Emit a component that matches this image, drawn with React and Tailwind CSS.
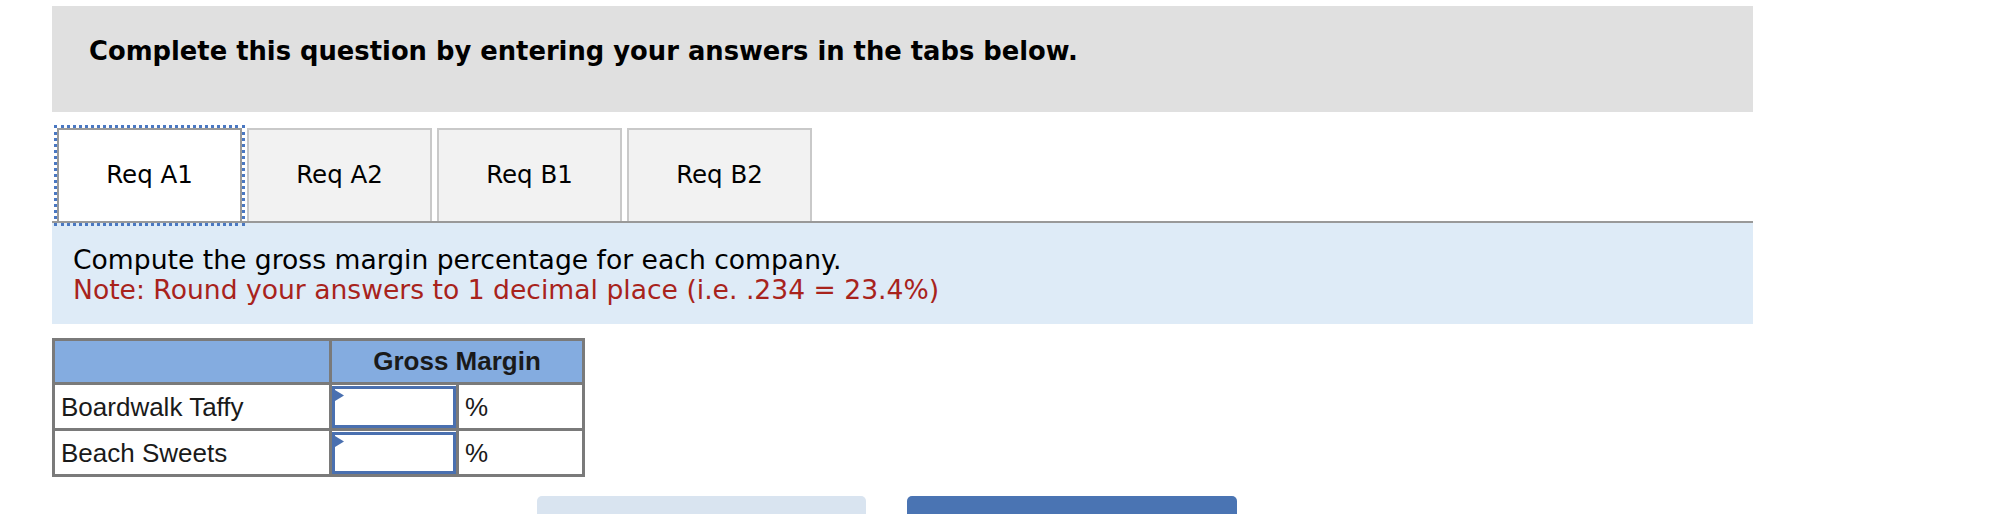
export default function App() {
  const tabs = ['Req A1', 'Req A2', 'Req B1', 'Req B2'];

  const rows = [
    { name: 'Boardwalk Taffy' },
    { name: 'Beach Sweets' },
  ];

  return (
    <div className="w-[1998px] h-[514px] bg-white overflow-hidden pt-[6px] pl-[52px]">
      <div className="w-[1701px]">
        {/* Instruction header */}
        <div className="h-[106px] bg-[#e0e0e0] pl-[37px] pt-[29px]">
          <h2 className="font-['DejaVu_Sans',sans-serif] font-bold text-[25.8px] leading-[32px] text-black">
            Complete this question by entering your answers in the tabs below.
          </h2>
        </div>

        {/* Tabs */}
        <div className="mt-[16px] flex pl-[5px] gap-[5px] border-b-2 border-[#999999]">
          {tabs.map((tab, idx) => (
            <div
              key={tab}
              className={
                idx === 0
                  ? 'relative w-[185px] h-[93px] flex items-center justify-center bg-white border-2 border-b-0 border-[#9a9a9a] font-["DejaVu_Sans",sans-serif] text-[24.5px] text-black'
                  : 'w-[185px] h-[93px] flex items-center justify-center bg-[#f2f2f2] border-2 border-b-0 border-[#c9c9c9] font-["DejaVu_Sans",sans-serif] text-[24.5px] text-black'
              }
            >
              {idx === 0 && (
                <span className="absolute -left-[5px] -top-[5px] -right-[5px] -bottom-[5px] border-[3px] border-dotted border-[#4a78c2] pointer-events-none" />
              )}
              {tab}
            </div>
          ))}
        </div>

        {/* Task */}
        <div className="h-[101px] bg-[#deebf7] pl-[21px] pt-[22px] font-['DejaVu_Sans',sans-serif] text-[26.6px] leading-[30px]">
          <p className="text-black">Compute the gross margin percentage for each company.</p>
          <p className="text-[#a8231c]">Note: Round your answers to 1 decimal place (i.e. .234 = 23.4%)</p>
        </div>

        {/* Answer table */}
        <table className="mt-[14px] border-collapse font-['Liberation_Sans',Arial,sans-serif] text-[26px] text-[#1a1a1a]">
          <thead>
            <tr className="h-[44px] bg-[#84ace0]">
              <th className="w-[277px] border-[3px] border-[#7a7a7a]"></th>
              <th colSpan={2} className="border-[3px] border-[#7a7a7a] font-bold text-center">
                Gross Margin
              </th>
            </tr>
          </thead>
          <tbody>
            {rows.map((row) => (
              <tr key={row.name} className="h-[46px]">
                <td className="border-[3px] border-[#7a7a7a] pl-[6px] text-left leading-[36px]">{row.name}</td>
                <td className="w-[127px] border-[3px] border-[#7a7a7a] p-0">
                  <div className="relative h-[42px] border-[3px] border-[#4a70b0] bg-white">
                    <svg className="absolute left-0 top-[1px]" width="10" height="11" viewBox="0 0 10 11">
                      <polygon points="0,0 9,5.5 0,11" fill="#4a70b0" />
                    </svg>
                  </div>
                </td>
                <td className="w-[126px] border-[3px] border-[#7a7a7a] pl-[6px] text-left leading-[36px]">%</td>
              </tr>
            ))}
          </tbody>
        </table>

        {/* Buttons */}
        <div className="mt-[19px] flex gap-[41px] pl-[485px]">
          <button className="w-[329px] h-[50px] rounded-t-[5px] bg-[#d9e4f0]"></button>
          <button className="w-[330px] h-[50px] rounded-t-[5px] bg-[#4a74b3]"></button>
        </div>
      </div>
    </div>
  );
}
